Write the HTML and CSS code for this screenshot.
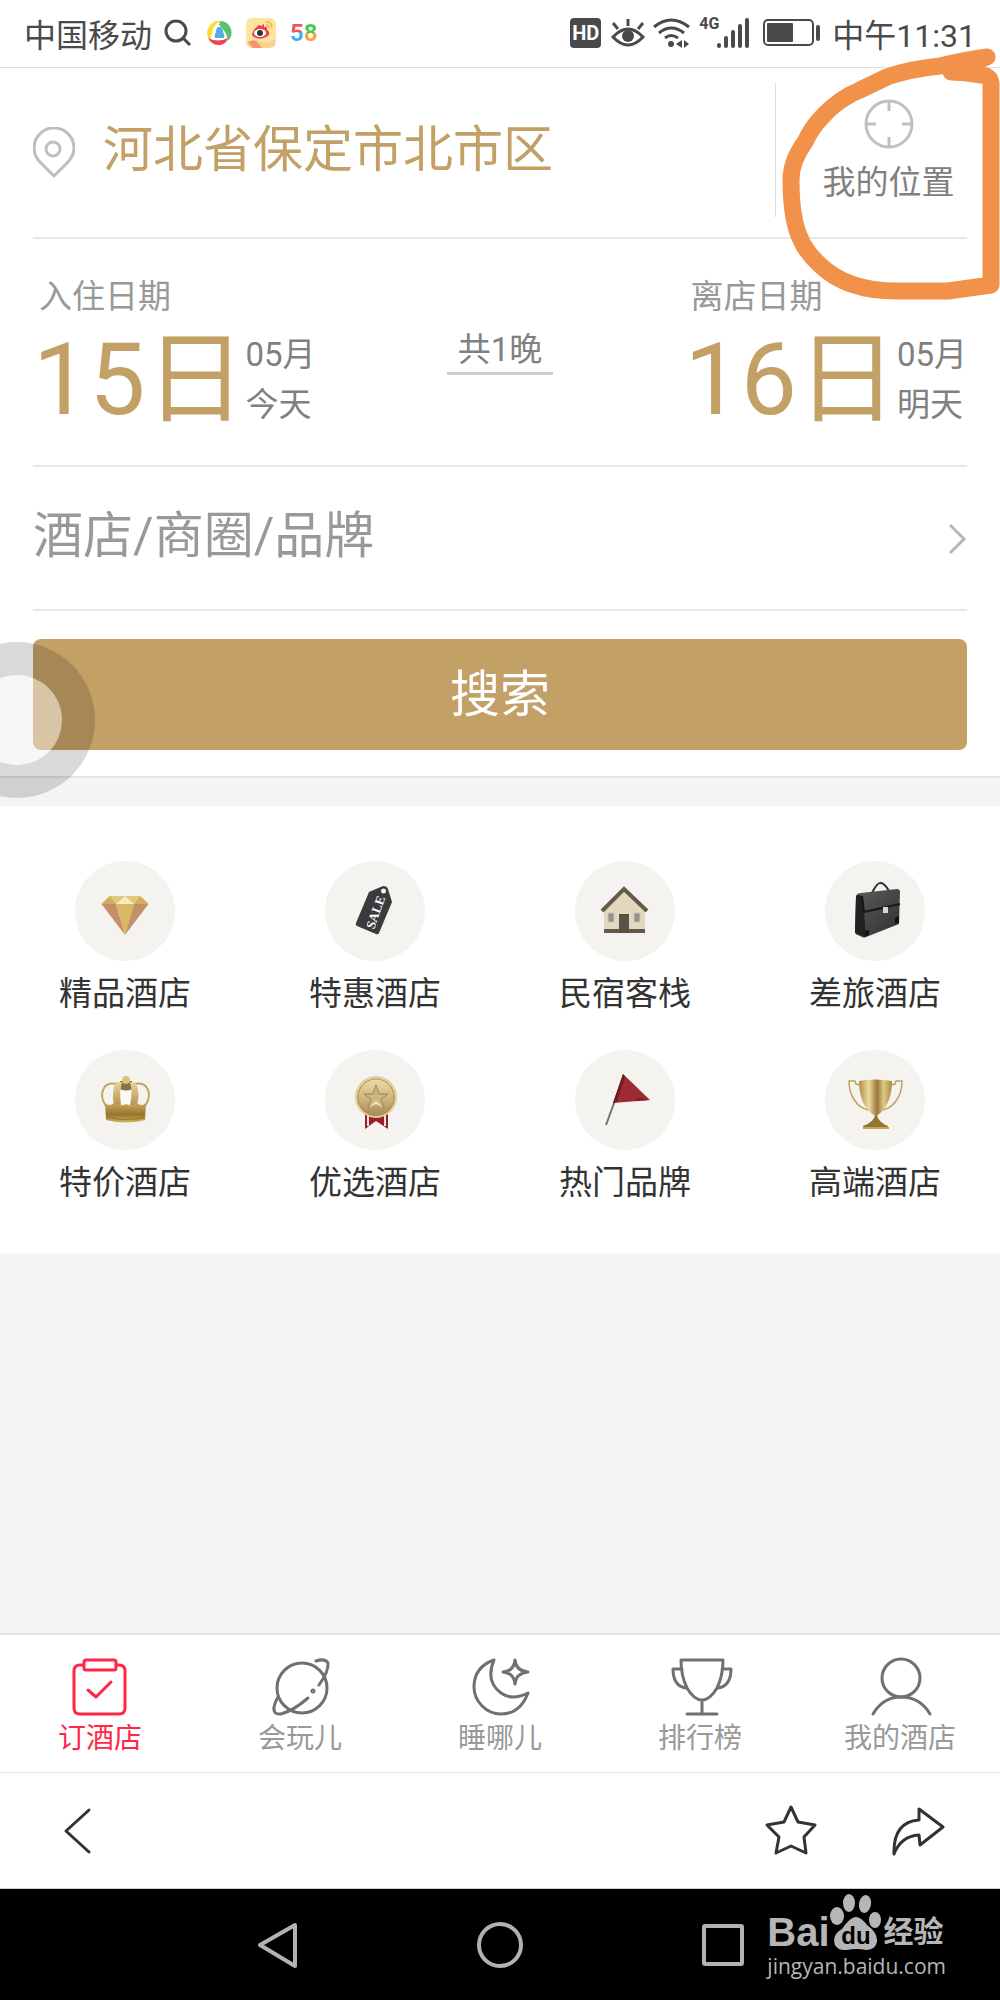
FILE: index.html
```html
<!DOCTYPE html>
<html lang="zh-cn">
  <head>
    <meta charset="UTF-8" />
    <meta name="viewport" content="width=device-width, initial-scale=1.0" />
    <title>订酒店</title>
    <link rel="stylesheet" href="styles.css">
  </head>
  <body>
    <div class="page">
      <!-- 状态栏 -->
      <header class="status">
        <div class="status-left">
          <span>中国移动</span>
          <svg class="search-icon" width="28" height="28" viewBox="0 0 28 28" fill="none" stroke="#4a4a4a" stroke-width="3">
            <circle cx="12" cy="12" r="10" />
            <path d="M19 19L26 26" />
          </svg>
          <svg width="26" height="26" viewBox="0 0 26 26">
            <path d="M4 21Q-2 13 4 5Q9 0 14 1Q7 6 6 13Q5 17 4 21Z" fill="#fbdc3c" />
            <path d="M14 1Q22 1 25 9Q27 16 22 21Q21 12 13 5Z" fill="#5fc06b" />
            <path d="M2 18Q12 23 22 18Q21 23 15 25Q6 26 2 18Z" fill="#ec4452" />
            <path d="M9 18Q8 15 10 12Q10 7 13 7Q17 7 17 12Q19 15 18 18Z" fill="#55aee0" />
          </svg>
          <svg width="30" height="30" viewBox="0 0 30 30">
            <rect width="30" height="30" rx="6" fill="#fbe5a0" />
            <path d="M1 24Q8 20 15 24Q22 26 29 20V27Q26 30 22 30H8Q2 30 1 24Z" fill="#fbd08c" />
            <path d="M2 24Q9 20 13 26L16 30H7Z" fill="#f4956c" />
            <path d="M6 16Q7 11 12 8Q12 6 15 8L18 6L18 9Q22 8 21 12Q25 14 22 18Q14 23 8 19Q6 18 6 16Z" fill="#e8414d" />
            <ellipse cx="14" cy="15" rx="6" ry="4" fill="#fff" />
            <circle cx="14" cy="15" r="3" fill="#333" />
            <path d="M20 4Q26 4 26 10M20 7Q23 7 23 10" fill="none" stroke="#f5b04c" stroke-width="1.5" />
          </svg>
          <span class="app58"><b class="five">5</b><b class="eight">8</b></span>
        </div>
        <div class="status-right">
          <span class="hd">HD</span>
          <svg width="34" height="30" viewBox="0 0 34 30" fill="none" stroke="#4a4a4a" stroke-width="3">
            <path d="M2 19Q17 3 32 19Q17 35 2 19ZM17 8V1M7 11L2 5M27 11L32 5" />
            <circle cx="17" cy="18" r="6" fill="#4a4a4a" stroke="none" />
          </svg>
          <svg width="38" height="30" viewBox="0 0 38 30" fill="none" stroke="#4a4a4a" stroke-width="3">
            <path d="M1 9Q18 -5 36 9M6 15Q18 5 31 15M12 20Q18 15 25 20" />
            <circle cx="18" cy="26" r="3" fill="#4a4a4a" stroke="none" />
            <path d="M23 26L29 22V30ZM36 26L31 22V30Z" fill="#4a4a4a" stroke="none" />
          </svg>
          <span class="net">4G</span>
          <svg class="signal" width="32" height="30" viewBox="0 0 32 30" stroke="#4a4a4a" stroke-width="4" stroke-linecap="round">
            <path d="M2 27V28M9 20V28M16 14V28M23 8V28M30 2V28" />
          </svg>
          <svg class="battery" width="57" height="28" viewBox="0 0 57 28">
            <rect x="1" y="1" width="49" height="25" rx="4" fill="none" stroke="#4a4a4a" stroke-width="2" />
            <rect x="4" y="4" width="26" height="19" rx="1" fill="#4a4a4a" />
            <rect x="53" y="6" width="4" height="16" rx="2" fill="#4a4a4a" />
          </svg>
          <span>中午11:31</span>
        </div>
      </header>

      <!-- 搜索条件 -->
      <main class="search">
        <div class="row place">
          <svg width="42" height="52" viewBox="0 0 42 52" fill="none" stroke="#bebebe" stroke-width="3">
            <path d="M21 49L8 36Q1 29 1 21A20 20 0 0 1 41 21Q41 29 34 36Z" />
            <circle cx="20" cy="22" r="7" />
          </svg>
          <button class="city">河北省保定市北市区</button>
          <button class="mypos">
            <svg width="50" height="50" viewBox="0 0 50 50" fill="none" stroke="#c0c0c0" stroke-width="3">
              <circle cx="25" cy="25" r="23" />
              <path d="M25 2V12M25 48V38M2 25H12M48 25H38" />
            </svg>
            <span>我的位置</span>
          </button>
        </div>
        <div class="row dates">
          <button class="date">
            <span class="date-label">入住日期</span>
            <span class="date-value">
              <span class="day">15日</span>
              <span class="month">05月<br>今天</span>
            </span>
          </button>
          <span class="nights">共1晚</span>
          <button class="date">
            <span class="date-label">离店日期</span>
            <span class="date-value">
              <span class="day">16日</span>
              <span class="month">05月<br>明天</span>
            </span>
          </button>
        </div>
        <div class="row keyword">
          <input type="text" placeholder="酒店/商圈/品牌" aria-label="酒店/商圈/品牌">
          <svg width="18" height="32" viewBox="0 0 18 32" fill="none" stroke="#b8b8b8" stroke-width="3">
            <path d="M1 3L15 17L1 31" />
          </svg>
        </div>
        <button class="submit">搜索</button>
        <button class="float-ball" aria-label="悬浮球"></button>
      </main>

      <!-- 酒店分类 -->
      <nav class="types">
        <a href="#" class="type">
          <svg viewBox="0 0 100 100">
            <path d="M35 35H65L73.5 43H26.5Z" fill="#d9bd68" />
            <path d="M35 35L26.5 43H41Z" fill="#cfae5c" />
            <path d="M65 35L73.5 43H59Z" fill="#cfae5c" />
            <path d="M35 35H50L41 43ZM65 35H50L59 43Z" fill="#dfc878" />
            <path d="M50 35L59 43H41Z" fill="#f3ebc2" />
            <path d="M26.5 43H41L50 74Z" fill="#c48f68" />
            <path d="M41 43H59L50 74Z" fill="#d8b960" />
            <path d="M59 43H73.5L50 74Z" fill="#c3906c" />
          </svg>
          <span>精品酒店</span>
        </a>
        <a href="#" class="type">
          <svg viewBox="0 0 100 100">
            <path d="M44 31L58 25Q62 25 63 28L67 41L54 72Q53 74 51 73L32 65Q30 64 31 62Z" fill="#3b3b3d" />
            <circle cx="58.5" cy="30" r="2.5" fill="#f4f3ef" />
            <text class="sale" x="50" y="56" transform="rotate(-70 50 51)">SALE</text>
          </svg>
          <span>特惠酒店</span>
        </a>
        <a href="#" class="type">
          <svg viewBox="0 0 100 100">
            <path d="M29 49L49 28L70 49V72H29Z" fill="#e4d7bf" />
            <path d="M29 68H70V72H29Z" fill="#5f5948" />
            <path d="M27 50L49 28L72 50" fill="none" stroke="#625c4b" stroke-width="4" />
            <rect x="44" y="53" width="10" height="19" fill="#5c5242" />
            <rect x="33" y="52" width="6" height="9" fill="#90908d" stroke="#cfc6b5" />
            <rect x="59" y="52" width="6" height="9" fill="#90908d" stroke="#cfc6b5" />
          </svg>
          <span>民宿客栈</span>
        </a>
        <a href="#" class="type">
          <svg viewBox="0 0 100 100">
            <defs>
              <linearGradient id="leather" x1="0" y1="0" x2="1" y2="1">
                <stop offset="0" stop-color="#5c5c5c" />
                <stop offset="1" stop-color="#303030" />
              </linearGradient>
            </defs>
            <path d="M47 32Q52 22 55 22Q59 21 64 30" fill="none" stroke="#2e2e2e" stroke-width="2" />
            <path d="M31 35Q32 32 36 32L72 28Q75 28 75 31L74 63L41 76Q39 77 37 76L31 73Q30 72 30 70Z" fill="url(#leather)" />
            <path d="M31 35Q35 32 38 37L41 76L31 73Q30 72 30 70Z" fill="#222" />
            <path d="M37 35L39 51L75 43" fill="none" stroke="#171717" stroke-width="2" />
            <path d="M70 57L74 55V61L70 63ZM40 70L44 69V74L40 76Z" fill="#111" />
            <rect x="58" y="46" width="5" height="6" fill="#ddd8c9" />
          </svg>
          <span>差旅酒店</span>
        </a>
        <a href="#" class="type">
          <svg viewBox="0 0 100 100">
            <defs>
              <linearGradient id="gold" x1="0" y1="0" x2="1" y2="0">
                <stop offset="0" stop-color="#b08d48" />
                <stop offset="0.3" stop-color="#eadca0" />
                <stop offset="0.55" stop-color="#99783a" />
                <stop offset="0.75" stop-color="#dfc985" />
                <stop offset="1" stop-color="#a98741" />
              </linearGradient>
              <linearGradient id="arch" x1="0" y1="0" x2="0" y2="1">
                <stop offset="0" stop-color="#e6d59c" />
                <stop offset="1" stop-color="#b5954e" />
              </linearGradient>
              <linearGradient id="band" x1="0" y1="0" x2="0" y2="1">
                <stop offset="0" stop-color="#c8ab5f" />
                <stop offset="0.6" stop-color="#97742d" />
                <stop offset="1" stop-color="#d2b564" />
              </linearGradient>
            </defs>
            <path d="M31 56Q25 47 28 40Q31 32 41 34M70 56Q76 47 73 40Q70 32 60 34" fill="none" stroke="#c2a45c" stroke-width="2" />
            <rect x="45" y="38" width="12" height="16" fill="#fbfaf6" />
            <path d="M45 31H57V39Q51 42 45 39Z" fill="#8a7045" />
            <path d="M41 32Q36 43 39 55H46Q44 43 47 32ZM60 32Q66 43 62 55H55Q58 43 55 32Z" fill="url(#arch)" />
            <circle cx="51" cy="30" r="4" fill="#dbc27c" />
            <path d="M30 53Q34 57 39 53Q45 57 51 54Q57 57 62 53Q67 57 71 53L70 70Q51 75 31 70Z" fill="url(#band)" />
            <path d="M31 67Q51 72 70 67" fill="none" stroke="#846421" stroke-dasharray="2 1" />
          </svg>
          <span>特价酒店</span>
        </a>
        <a href="#" class="type">
          <svg viewBox="0 0 100 100">
            <defs>
              <linearGradient id="medal" x1="0" y1="0" x2="0" y2="1">
                <stop offset="0" stop-color="#eddfae" />
                <stop offset="0.55" stop-color="#cdb57c" />
                <stop offset="1" stop-color="#a48750" />
              </linearGradient>
            </defs>
            <path d="M40 62H63V79L51 71L40 79Z" fill="#9a1f2b" />
            <path d="M43 64V76M60 64V76" stroke="#efe5d0" stroke-width="2" />
            <circle cx="51" cy="47" r="20" fill="url(#medal)" stroke="#e3d09a" stroke-width="2" />
            <circle cx="51" cy="47" r="18" fill="none" stroke="#a88f5e" />
            <path d="M51 35L54 44H63L56 49L59 58L51 53L43 58L46 49L39 44H48Z" fill="#cdb67e" stroke="#9c8558" />
            <path d="M43 58L51 51L59 58L51 54Z" fill="#f0e5bc" />
          </svg>
          <span>优选酒店</span>
        </a>
        <a href="#" class="type">
          <svg viewBox="0 0 100 100">
            <path d="M49 26L31 75" stroke="#77726f" stroke-width="2" />
            <path d="M48 24L75 50L38 53Z" fill="#9e2b32" />
            <path d="M48 24L50 27L42 52L38 53Z" fill="#74191f" />
            <path d="M62 48L75 50L60 51Z" fill="#7d1d24" />
          </svg>
          <span>热门品牌</span>
        </a>
        <a href="#" class="type">
          <svg viewBox="0 0 100 100">
            <path d="M35 35L31 34L30 31H24Q24 43 30 51Q35 58 43 60M66 35L70 34L71 31H77Q77 43 71 51Q66 58 58 60" fill="none" stroke="#bfa15b" stroke-width="1.5" />
            <path d="M34 31Q50 28 67 31Q67 46 61 56Q57 63 51 66Q44 63 40 56Q34 46 34 31Z" fill="url(#gold)" />
            <path d="M50 65H52Q53 72 63 76V78Q50 80 38 78V76Q49 72 50 65Z" fill="#96752f" />
            <path d="M38 78H64" stroke="#c4a758" stroke-width="2" />
          </svg>
          <span>高端酒店</span>
        </a>
      </nav>

      <!-- 底部标签 -->
      <nav class="tabs">
        <a href="#" class="tab active">
          <svg viewBox="0 0 60 60">
            <path d="M13 9H10Q4 9 4 15V52Q4 58 10 58H49Q55 58 55 52V15Q55 9 49 9H46" />
            <rect x="14" y="4" width="32" height="10" rx="2" />
            <path d="M18 34L26 41L41 26" />
          </svg>
          <span>订酒店</span>
        </a>
        <a href="#" class="tab">
          <svg viewBox="0 0 60 60">
            <circle cx="32" cy="32" r="25" />
            <path d="M46 5Q55 2 58 7Q59 15 49 29M38 42Q23 55 11 58Q3 59 4 51Q5 46 8 41" />
            <circle cx="43" cy="35" r="1" />
          </svg>
          <span>会玩儿</span>
        </a>
        <a href="#" class="tab">
          <svg viewBox="0 0 60 60">
            <path d="M24 4Q4 11 4 31C4 45 16 58 31 58Q50 58 58 37Q42 45 31 37Q15 25 24 4Z" />
            <path d="M45 4Q46 15 58 16Q46 17 45 28Q44 17 33 16Q44 15 45 4Z" />
          </svg>
          <span>睡哪儿</span>
        </a>
        <a href="#" class="tab">
          <svg viewBox="0 0 60 60">
            <path d="M11 4H53Q53 20 47 32Q40 44 32 44Q24 44 17 32Q11 20 11 4ZM32 44V58M17 58H47M12 13H3Q3 30 16 32M52 13H61Q61 30 48 32" />
          </svg>
          <span>排行榜</span>
        </a>
        <a href="#" class="tab">
          <svg viewBox="0 0 60 60">
            <circle cx="31" cy="22" r="19" />
            <path d="M3 58Q13 41 31 41Q50 41 60 58" />
          </svg>
          <span>我的酒店</span>
        </a>
      </nav>

      <!-- 浏览器工具栏 -->
      <div class="toolbar">
        <button class="back" aria-label="后退">
          <svg viewBox="0 0 54 54"><path d="M39 6L16 27L39 48" /></svg>
        </button>
        <button aria-label="收藏">
          <svg viewBox="0 0 54 54"><path d="M27 3L34 18L51 21L40 33L42 49L27 42L12 49L15 33L3 21L20 18Z" /></svg>
        </button>
        <button aria-label="分享">
          <svg viewBox="0 0 54 54"><path d="M28 5L52 23L29 41L28 31Q10 32 3 50Q2 18 28 16Z" /></svg>
        </button>
      </div>

      <!-- 系统导航 -->
      <footer class="sysnav">
        <button aria-label="返回">
          <svg viewBox="0 0 50 50"><path d="M8 25L43 5V46Z" /></svg>
        </button>
        <button aria-label="主页">
          <svg viewBox="0 0 50 50"><circle cx="25" cy="25" r="21" /></svg>
        </button>
        <button aria-label="最近任务">
          <svg viewBox="0 0 50 50"><rect x="6" y="6" width="38" height="38" rx="1" /></svg>
        </button>
        <div class="watermark">
          <div class="logo">
            <span class="bai">Bai</span>
            <svg width="52" height="56" viewBox="0 0 52 56" fill="#b6b6b6">
              <ellipse cx="7" cy="22" rx="7" ry="9" />
              <ellipse cx="19" cy="9" rx="6" ry="9" />
              <ellipse cx="35" cy="10" rx="6" ry="9" transform="rotate(10 35 10)" />
              <ellipse cx="45" cy="26" rx="6" ry="8" />
              <path d="M26 23Q31 23 37 31Q48 39 47 48Q45 56 36 56Q26 54 17 56Q5 57 4 47Q4 39 12 35Q20 23 26 23Z" />
              <text class="du" x="26" y="50">du</text>
            </svg>
            <span class="jy">经验</span>
          </div>
          <a href="#">jingyan.baidu.com</a>
        </div>
      </footer>

      <!-- 手绘标注 -->
      <svg class="mark" width="220" height="260" viewBox="780 45 220 260">
        <path d="M987 57Q965 60 940 66Q910 69 887 77L860 90Q838 99 822 117Q812 127 805 142Q791 161 791 180Q791 220 801 240Q806 252 820 265Q848 292 900 291H948L991 285V83Q990 75 980 75Q965 72 951 72L987 57" />
      </svg>
    </div>
  </body>
</html>
```

FILE: styles.css
```css
* {
  margin: 0;
  padding: 0;
  box-sizing: border-box;
}
body {
  font-family: Roboto, "Noto Sans CJK SC", sans-serif;
  font-size: 33px;
  background-color: #f3f5f7;
}
button,
input {
  font: inherit;
  color: inherit;
  border: none;
  background: none;
}
a {
  color: inherit;
  text-decoration: none;
}
svg {
  display: block;
  flex-shrink: 0;
}
.page {
  position: relative;
  display: flex;
  flex-direction: column;
  min-height: 100vh;
  overflow: hidden;
}

/* 状态栏 */
.status {
  display: flex;
  justify-content: space-between;
  height: 68px;
  padding: 0 24px 2px;
  font-size: 32px;
  color: #4a4a4a;
  background-color: #fff;
  border-bottom: 1px solid #dedede;
}
.status-left,
.status-right {
  display: flex;
  align-items: center;
}
.status-left {
  gap: 14px;
}
.search-icon {
  margin-left: -2px;
}
.app58 {
  font-size: 24px;
}
.app58 b {
  color: transparent;
  -webkit-background-clip: text;
  background-clip: text;
}
.five {
  background-image: linear-gradient(#f2535b 45%, #45aee8 45%);
}
.eight {
  background-image: linear-gradient(#46cc4d 50%, #fca544 50%);
}
.status-right {
  gap: 8px;
}
.hd {
  width: 31px;
  margin-right: 2px;
  font-size: 20px;
  font-weight: bold;
  line-height: 30px;
  text-align: center;
  color: #fff;
  background-color: #4a4a4a;
  border-radius: 4px;
}
.net {
  align-self: flex-start;
  margin-top: 14px;
  font-size: 16px;
  font-weight: bold;
  line-height: 20px;
}
.signal {
  margin-left: -10px;
}
.battery {
  margin: 0 4px 0 6px;
}

/* 搜索条件 */
.search {
  position: relative;
  padding: 0 33px 26px;
  background-color: #fff;
  border-bottom: 2px solid #e3e5e6;
}
.row {
  display: flex;
  align-items: center;
  border-bottom: 2px solid #e8e8e8;
}
.place {
  height: 171px;
}
.city {
  flex: 1;
  margin-left: 28px;
  padding-bottom: 6px;
  font-size: 50px;
  line-height: 60px;
  text-align: left;
  color: #c2a066;
}
.mypos {
  display: flex;
  flex-direction: column;
  align-items: center;
  width: 192px;
  height: 134px;
  padding: 16px 0 0 34px;
  margin-bottom: 6px;
  color: #808080;
  border-left: 1px solid #dedede;
}
.mypos span {
  margin-top: 14px;
  line-height: 40px;
}
.dates {
  justify-content: space-between;
  padding: 35px 0;
}
.date {
  text-align: left;
}
.date-label {
  display: block;
  margin-bottom: 10px;
  padding-left: 6px;
  line-height: 46px;
  color: #999;
}
.date-value {
  display: flex;
}
.day {
  font-size: 100px;
  line-height: 100px;
  color: #c2a066;
}
.month {
  line-height: 50px;
  color: #808080;
}
.nights {
  padding: 0 11px 2px;
  line-height: 40px;
  color: #808080;
  border-bottom: 3px solid #ccc;
}
.keyword {
  height: 144px;
}
.keyword input {
  flex: 1;
  min-width: 0;
  height: 74px;
  padding-bottom: 4px;
  font-size: 50px;
  outline: none;
}
.keyword input::placeholder {
  color: #999;
  opacity: 1;
}
.submit {
  display: block;
  width: 100%;
  height: 111px;
  margin-top: 28px;
  padding-bottom: 10px;
  font-size: 50px;
  color: #fff;
  background-color: #c2a066;
  border-radius: 8px;
}
/* 悬浮球压在搜索按钮上 */
.float-ball {
  position: absolute;
  left: -61px;
  bottom: -22px;
  width: 156px;
  height: 156px;
  border: 33px solid rgba(0, 0, 0, 0.15);
  border-radius: 50%;
  background: rgba(238, 238, 238, 0.47) padding-box;
}

/* 酒店分类 */
.types {
  display: grid;
  grid-template-columns: repeat(4, 1fr);
  row-gap: 36px;
  margin-top: 28px;
  padding: 55px 0 50px;
  background-color: #fff;
}
.type {
  display: flex;
  flex-direction: column;
  align-items: center;
  line-height: 40px;
  color: #333;
}
.type svg {
  width: 100px;
  height: 100px;
  margin-bottom: 13px;
  background-color: #f4f3ef;
  border-radius: 50%;
}
.sale {
  font-family: "Liberation Serif", serif;
  font-size: 13px;
  font-weight: bold;
  text-anchor: middle;
  fill: #fff;
}

/* 底部标签 */
.tabs {
  display: grid;
  grid-template-columns: repeat(5, 1fr);
  margin-top: auto;
  padding: 21px 0 15px;
  background-color: #fff;
  border-top: 2px solid #e3e5e6;
}
.tab {
  display: flex;
  flex-direction: column;
  align-items: center;
  font-size: 28px;
  line-height: 36px;
  color: #999;
}
.tab svg {
  width: 60px;
  height: 60px;
  margin-bottom: 5px;
  overflow: visible;
  fill: none;
  stroke: #707070;
  stroke-width: 3;
  stroke-linecap: round;
  stroke-linejoin: round;
}
.active {
  color: #ff2648;
}
.active svg {
  stroke: #ff2648;
}

/* 浏览器工具栏 */
.toolbar {
  display: flex;
  align-items: center;
  gap: 73px;
  height: 117px;
  padding: 0 55px 0 50px;
  background-color: #fff;
  border-top: 1px solid #e5e5e5;
  border-bottom: 1px solid #ccc;
}
.toolbar svg {
  width: 54px;
  height: 54px;
  fill: none;
  stroke: #333;
  stroke-width: 3;
  stroke-linecap: round;
  stroke-linejoin: round;
}
.back {
  margin-right: auto;
}

/* 系统导航 */
.sysnav {
  position: relative;
  display: grid;
  grid-template-columns: repeat(3, 1fr);
  justify-items: center;
  align-items: center;
  height: 111px;
  padding: 0 166px;
  background-color: #000;
}
.sysnav button svg {
  width: 50px;
  height: 50px;
  fill: none;
  stroke: #b2b2b2;
  stroke-width: 4;
  stroke-linejoin: round;
}
.watermark {
  position: absolute;
  right: 54px;
  top: 5px;
  color: #b6b6b6;
}
.watermark a {
  display: block;
  font-family: "Open Sans", sans-serif;
  font-size: 21px;
  line-height: 32px;
}
.logo {
  display: flex;
  align-items: flex-end;
  line-height: 36px;
}
.bai {
  font-family: "Liberation Sans", sans-serif;
  font-size: 40px;
  font-weight: bold;
}
.jy {
  margin-left: 2px;
  font-size: 30px;
  font-weight: bold;
}
.du {
  font-family: "Liberation Sans", sans-serif;
  font-size: 24px;
  font-weight: bold;
  text-anchor: middle;
  fill: #000;
}

/* 手绘标注 */
.mark {
  position: absolute;
  top: 45px;
  right: 0;
  fill: none;
  stroke: #f29149;
  stroke-width: 17;
  stroke-linecap: round;
  stroke-linejoin: round;
  pointer-events: none;
}
```
